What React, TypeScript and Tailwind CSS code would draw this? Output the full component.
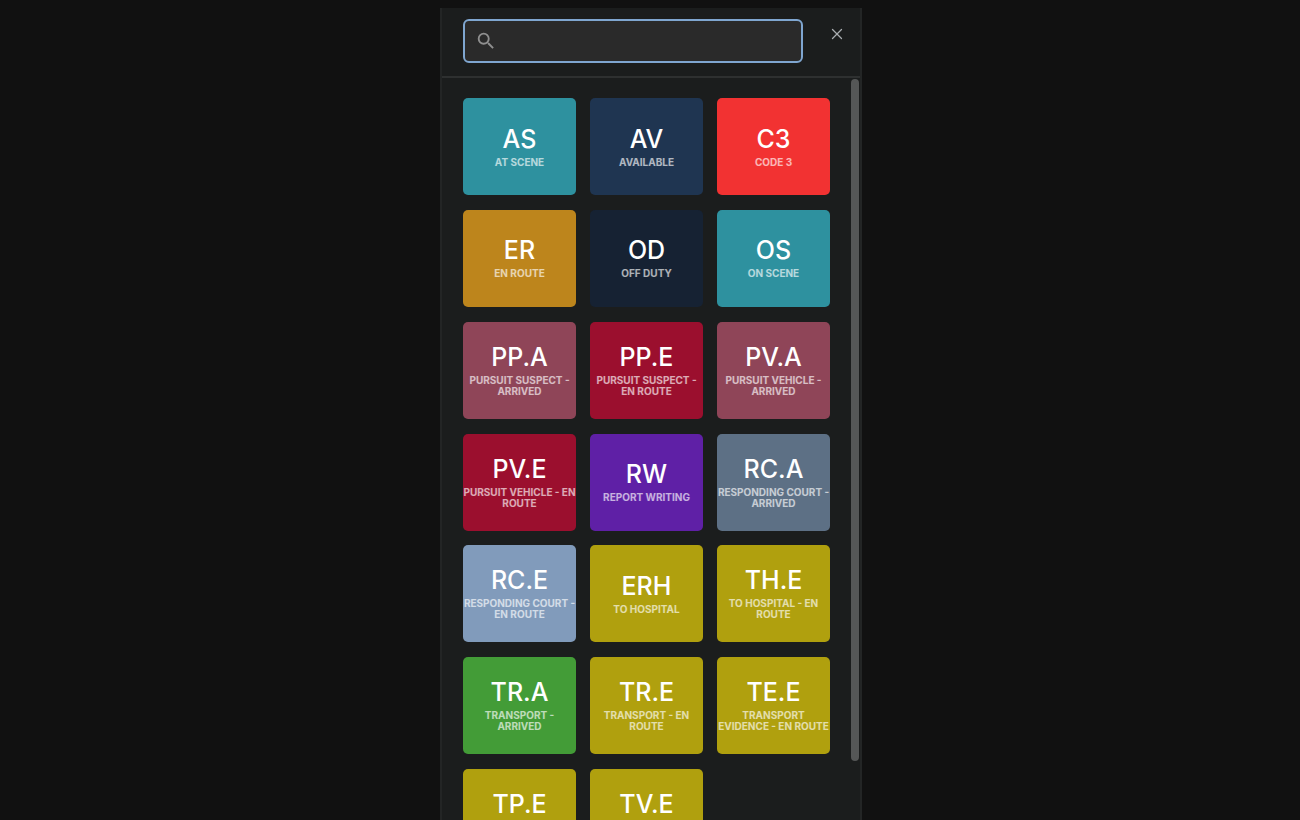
import { MdSearch } from "react-icons/md";
import { X } from "lucide-react";

type Item = { code: string; label: string; bg: string };

const items: Item[] = [
  { code: "AS", label: "AT SCENE", bg: "bg-[#2e919f]" },
  { code: "AV", label: "AVAILABLE", bg: "bg-[#1f3551]" },
  { code: "C3", label: "CODE 3", bg: "bg-[#f23232]" },
  { code: "ER", label: "EN ROUTE", bg: "bg-[#bd851c]" },
  { code: "OD", label: "OFF DUTY", bg: "bg-[#162233]" },
  { code: "OS", label: "ON SCENE", bg: "bg-[#2e919f]" },
  { code: "PP.A", label: "PURSUIT SUSPECT - ARRIVED", bg: "bg-[#8f4558]" },
  { code: "PP.E", label: "PURSUIT SUSPECT - EN ROUTE", bg: "bg-[#9b0f2e]" },
  { code: "PV.A", label: "PURSUIT VEHICLE - ARRIVED", bg: "bg-[#8f4558]" },
  { code: "PV.E", label: "PURSUIT VEHICLE - EN ROUTE", bg: "bg-[#9b0f2e]" },
  { code: "RW", label: "REPORT WRITING", bg: "bg-[#5f20a6]" },
  { code: "RC.A", label: "RESPONDING COURT - ARRIVED", bg: "bg-[#5d7085]" },
  { code: "RC.E", label: "RESPONDING COURT - EN ROUTE", bg: "bg-[#819bbb]" },
  { code: "ERH", label: "TO HOSPITAL", bg: "bg-[#b0a00e]" },
  { code: "TH.E", label: "TO HOSPITAL - EN ROUTE", bg: "bg-[#b0a00e]" },
  { code: "TR.A", label: "TRANSPORT - ARRIVED", bg: "bg-[#439c37]" },
  { code: "TR.E", label: "TRANSPORT - EN ROUTE", bg: "bg-[#b0a00e]" },
  { code: "TE.E", label: "TRANSPORT\nEVIDENCE - EN ROUTE", bg: "bg-[#b0a00e]" },
  { code: "TP.E", label: "TRANSPORT PERSON - EN ROUTE", bg: "bg-[#b0a00e]" },
  { code: "TV.E", label: "TRANSPORT VEHICLE - EN ROUTE", bg: "bg-[#b0a00e]" },
];

function Card({ item }: { item: Item }) {
  return (
    <div
      className={`${item.bg} h-[97px] rounded-[5px] flex flex-col items-center justify-center text-center pb-[2px]`}
    >
      <div className="text-[25px] leading-[30px] font-medium text-white">{item.code}</div>
      <div className="mt-[3px] w-full text-[10px] leading-[11px] font-bold text-white/65 whitespace-pre-line">
        {item.label}
      </div>
    </div>
  );
}

export default function App() {
  return (
    <div className="h-[820px] overflow-hidden bg-[#111111] font-['Inter','Liberation_Sans',sans-serif] pt-2">
      <div className="ml-[440px] w-[422px] h-[812px] bg-[#1b1d1d] border-x-2 border-x-[#232525] flex flex-col">
        <div className="h-[70px] shrink-0 flex border-b-2 border-b-[#2e3030] pl-[21px]">
          <div className="mt-[11px] w-[340px] h-[44px] rounded-[6px] border-2 border-[#7fa6d0] bg-[#2a2a2a] flex items-center pl-[10px]">
            <MdSearch size={22} className="text-[#8f8f8f]" />
          </div>
          <X size={18} strokeWidth={1.75} className="ml-[25px] mt-[17px] text-[#a9adb0]" />
        </div>
        <div className="flex-1 min-h-0 flex">
          <div className="w-[409px] shrink-0 pl-[21px] pt-[20px]">
            <div className="grid grid-cols-[113px_113px_113px] gap-x-[14px] gap-y-[14.85px]">
              {items.map((item) => (
                <Card key={item.code} item={item} />
              ))}
            </div>
          </div>
          <div className="flex-1 pt-[1px]">
            <div className="w-[8px] h-[682px] rounded-full bg-[#555757]" />
          </div>
        </div>
      </div>
    </div>
  );
}
